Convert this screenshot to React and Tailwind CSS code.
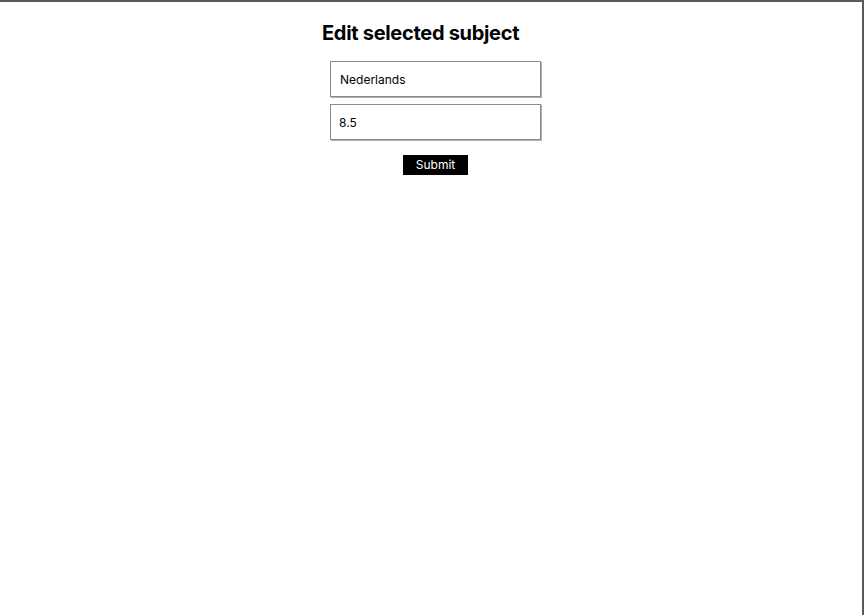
export default function App() {
  return (
    <div
      className="w-[864px] h-[615px] bg-white border-t-2 border-r-2 border-[#5a5a5a] overflow-hidden"
      style={{ fontFamily: "Inter, 'Liberation Sans', sans-serif" }}
    >
      <div className="flex justify-center pl-[9px] pt-[19px]">
        <div className="w-[227px] flex flex-col">
          <h1 className="text-[20px] leading-[24px] font-bold text-black tracking-[-0.3px]">
            Edit selected subject
          </h1>
          <form className="flex flex-col items-center px-[8px] mt-[16px] gap-[7px]">
            <input
              defaultValue="Nederlands"
              className="w-[211px] h-[36px] px-[9px] text-[12px] text-black border border-[#8a8a8a] shadow-[1px_1px_0_#b0b0b0] outline-none"
            />
            <input
              defaultValue="8.5"
              className="w-[211px] h-[36px] px-[8px] text-[12px] text-black border border-[#8a8a8a] shadow-[1px_1px_0_#b0b0b0] outline-none"
            />
            <button
              type="button"
              className="mt-[8px] w-[65px] h-[20px] bg-black text-white text-[12px] leading-[20px]"
            >
              Submit
            </button>
          </form>
        </div>
      </div>
    </div>
  );
}
